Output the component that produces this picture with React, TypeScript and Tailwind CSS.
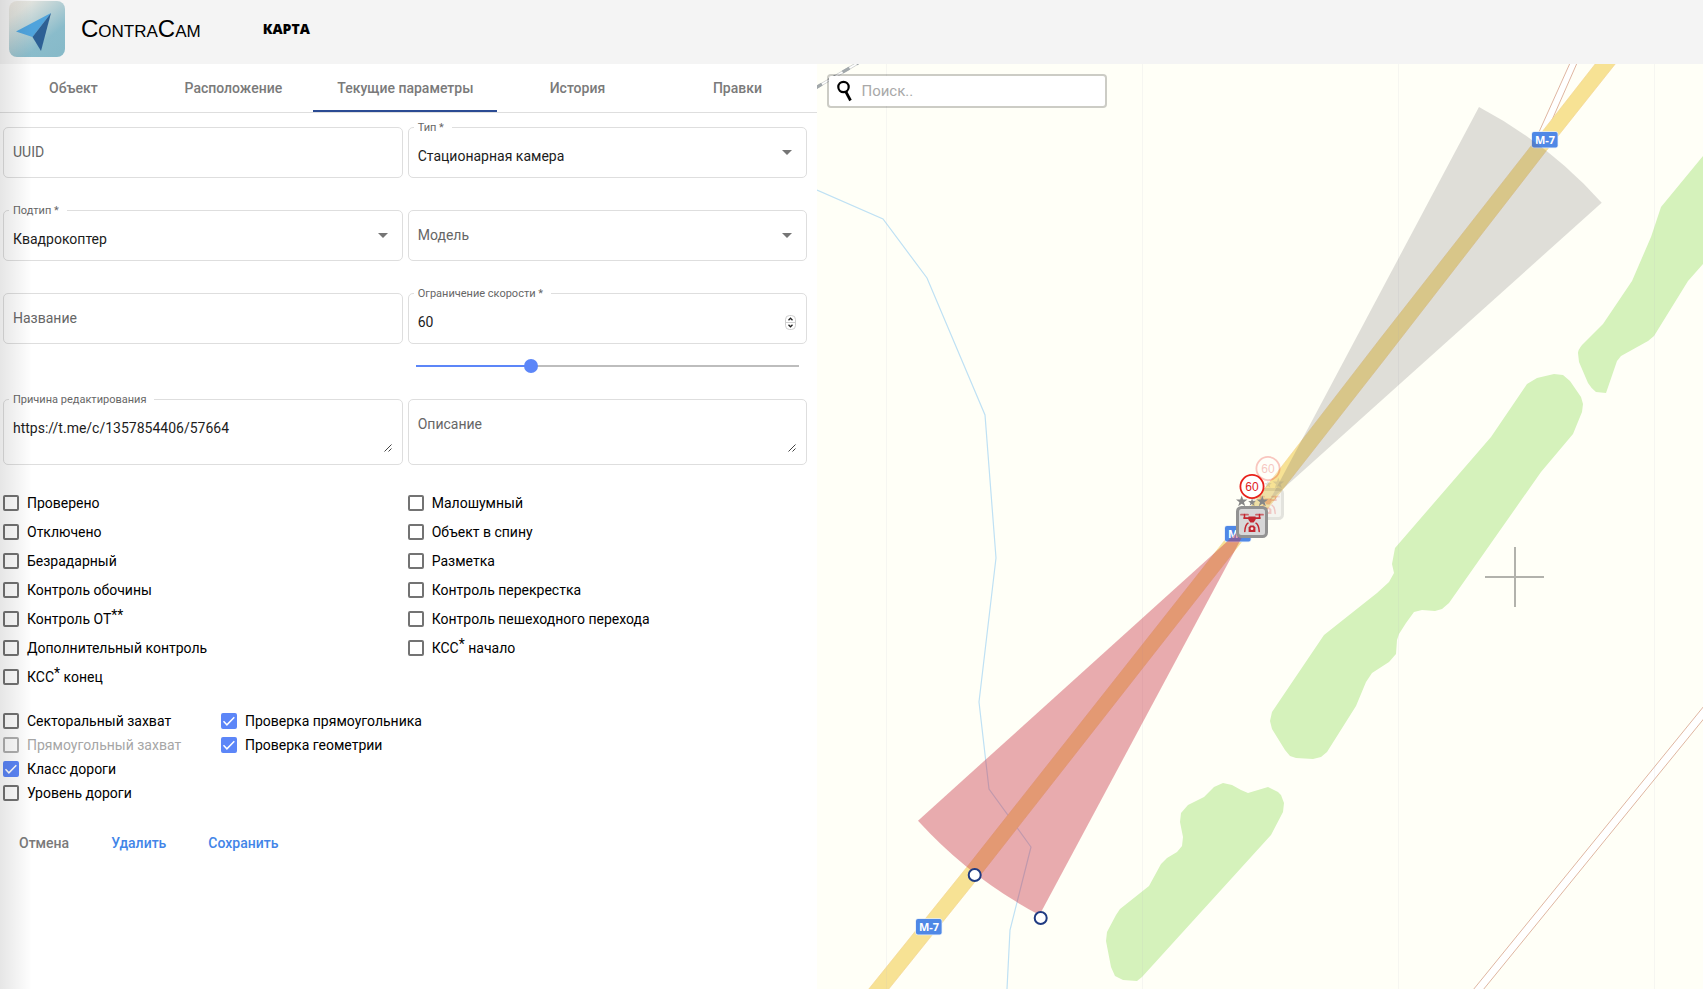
import { useState, type ReactNode } from "react";

const TABS = ["Объект", "Расположение", "Текущие параметры", "История", "Правки"];
const MAX_SPEED = 205;

const FIELD_BOX = "relative rounded-[5px] border border-[#dedede]";
const FLOAT_LABEL =
  "absolute -top-2 left-[5px] bg-white px-1 pr-2 text-[11px] leading-4 text-[#666]";
const REST_LABEL =
  "pointer-events-none absolute top-[14px] left-[9px] text-[14px] leading-5 text-[#666]";
const VALUE = "w-full bg-transparent text-[14px] text-[#1c1c1c] outline-none";

function Caret() {
  return (
    <svg
      className="pointer-events-none absolute top-[22px] right-[14px]"
      width="10"
      height="5"
      viewBox="0 0 10 5"
      aria-hidden="true"
    >
      <path d="M0 0h10L5 5z" fill="#757575" />
    </svg>
  );
}

function SelectField({ id, label, value }: { id: string; label: string; value?: string }) {
  return (
    <div className={`${FIELD_BOX} h-[51px]`}>
      <select
        id={id}
        defaultValue={value ?? ""}
        className={`${VALUE} h-full appearance-none pt-[7px] pr-8 pl-[9px]`}
      >
        <option value={value ?? ""}>{value ?? ""}</option>
      </select>
      <label htmlFor={id} className={value ? FLOAT_LABEL : REST_LABEL}>
        {label}
      </label>
      <Caret />
    </div>
  );
}

function TextField({ id, label }: { id: string; label: string }) {
  return (
    <div className={`${FIELD_BOX} h-[51px]`}>
      <input id={id} type="text" className={`${VALUE} h-full px-[9px]`} />
      <label htmlFor={id} className={REST_LABEL}>
        {label}
      </label>
    </div>
  );
}

function AreaField({ id, label, value }: { id: string; label: string; value?: string }) {
  return (
    <div className={`${FIELD_BOX} h-[66px]`}>
      <textarea
        id={id}
        defaultValue={value}
        className={`${VALUE} block h-full resize-none px-[9px] pt-[18px] leading-5`}
      />
      <label htmlFor={id} className={value ? FLOAT_LABEL : REST_LABEL}>
        {label}
      </label>
      <svg
        className="pointer-events-none absolute right-[10px] bottom-[12px]"
        width="8"
        height="8"
        viewBox="0 0 8 8"
        aria-hidden="true"
      >
        <path d="M0.5 7.5l7-7M4.5 7.5l3-3" stroke="#444" strokeWidth="1" />
      </svg>
    </div>
  );
}

function Note({ children }: { children: string }) {
  return <sup className="-top-1 text-[14px]">{children}</sup>;
}

function Check({
  id,
  children,
  checked = false,
  disabled = false,
}: {
  id: string;
  children: ReactNode;
  checked?: boolean;
  disabled?: boolean;
}) {
  const [on, setOn] = useState(checked);
  return (
    <div className="flex h-4 items-center gap-2">
      <span className="grid size-4 shrink-0">
        <input
          id={id}
          type="checkbox"
          checked={on}
          disabled={disabled}
          onChange={(e) => setOn(e.target.checked)}
          className="col-start-1 row-start-1 size-4 appearance-none rounded-[2px] border-2 border-[#737373] checked:border-[#5c86f8] checked:bg-[#5c86f8] disabled:border-[#b0b0b0]"
        />
        {on && (
          <svg
            className="pointer-events-none col-start-1 row-start-1"
            viewBox="0 0 16 16"
            aria-hidden="true"
          >
            <path d="M2.5 8.3l3.4 3.5 7.4-7.6" fill="none" stroke="#fff" strokeWidth="1.5" />
          </svg>
        )}
      </span>
      <label
        htmlFor={id}
        className={`text-[14px] leading-4 whitespace-nowrap ${disabled ? "text-[#a6a6a6]" : "text-black"}`}
      >
        {children}
      </label>
    </div>
  );
}

function Star({ x, y, r }: { x: number; y: number; r: number }) {
  const points = Array.from({ length: 10 }, (_, i) => {
    const a = (Math.PI / 5) * i - Math.PI / 2;
    const d = i % 2 ? r * 0.4 : r;
    return `${(x + d * Math.cos(a)).toFixed(2)},${(y + d * Math.sin(a)).toFixed(2)}`;
  }).join(" ");
  return <polygon points={points} fill="#878787" />;
}

function RoadShield({ x, y }: { x: number; y: number }) {
  return (
    <g>
      <rect x={x - 0.7} y={y - 0.7} width="27" height="17" rx="3" fill="#e4edf8" />
      <rect x={x} y={y} width="25.6" height="15.6" rx="2" fill="#4f88e6" />
      <text
        x={x + 13}
        y={y + 11.8}
        textAnchor="middle"
        fontSize="11"
        className="fill-white font-['Noto_Sans',sans-serif] font-bold"
      >
        М-7
      </text>
    </g>
  );
}

/* Drone camera pin; the origin is the centre of its square icon. */
function DronePin({ x, y, opacity = 1 }: { x: number; y: number; opacity?: number }) {
  return (
    <g transform={`translate(${x} ${y})`} opacity={opacity}>
      <circle cy="-35.5" r="11.6" fill="#fff" stroke="#e8211a" strokeWidth="1.8" />
      <text
        y="-31.2"
        textAnchor="middle"
        fontSize="12"
        className="fill-[#e0221c] font-['Liberation_Sans',sans-serif]"
      >
        60
      </text>
      <Star x={-10.3} y={-20.6} r={6} />
      <Star x={0} y={-19.6} r={4} />
      <Star x={10.3} y={-20.6} r={6} />
      <rect x="-14.5" y="-14.5" width="29" height="29" rx="4" fill="#d7d7d8" stroke="#929292" strokeWidth="3" />
      <g stroke="#c3262f" fill="none" strokeLinecap="round">
        <path d="M-11-7.3h7M4-7.3h7" strokeWidth="1.8" opacity="0.65" />
        <path d="M-7.5-7.5v3.2M7.5-7.5v3.2" strokeWidth="1.5" />
        <path d="M-8-3.9h5M8-3.9h-5" strokeWidth="1.7" />
        <path d="M-4 1.2C-6 2.5-7 5.5-7.2 9.5M4 1.2C6 2.5 7 5.5 7.2 9.5" strokeWidth="1.5" />
      </g>
      <path d="M-3.6-5.4h7.2v3.2L1.6.4h-3.2L-3.6-2.2z" fill="#c3262f" />
      <path d="M-3.4 10V5.6L-1.8 3.4h3.6l1.600 2.200V10z" fill="#c3262f" />
      <circle cy="6.7" r="1.4" fill="#f3e4e4" />
    </g>
  );
}

function MapDrawing() {
  return (
    <svg
      className="absolute inset-0 size-full"
      viewBox="817 64 886 925"
      preserveAspectRatio="xMinYMin slice"
      role="img"
      aria-label="Карта"
    >
      <g fill="#d5f2bb">
        <path d="M1703 156 1661 207 1651 237 1632 281 1603 324 1582 345Q1578 350 1578 353L1579 362 1588 383Q1591 388 1596 392L1606 393 1617 361 1621 356 1648 341 1654 336 1688 281 1703 264z" />
        <path d="M1537 378 1554 374 1563 375 1570 381 1581 397 1583 404 1582 412 1573 434 1541 472 1449 603 1442 609 1435 611 1422 610 1414 612 1406 623 1399 634 1397 640 1396 654 1389 662 1372 673 1366 682 1356 706 1327 752 1321 757 1313 759 1296 758 1290 756 1285 750 1272 729 1270 721 1272 712 1324 635 1377 593 1389 582 1394 573 1392 564 1395 548 1491 437 1527 384z" />
        <path d="M1223 783 1232 785 1241 790 1248 793 1268 787 1278 792 1281 795 1284 803 1283 812 1271 835 1142 977 1137 981 1123 980 1115 976 1111 967 1106 941 1107 932 1116 915 1120 909 1149 886 1161 864 1167 858 1177 852 1182 846 1183 837 1180 822 1181 813 1188 805 1204 797 1214 787z" />
      </g>

      <path
        d="M817 190 883 219 927 278 985 415 996 558 979 702 989 789 1031 847 1010 930 1007 989"
        fill="none"
        stroke="#bfe1f4"
        strokeWidth="1.2"
      />

      <path d="M1704 706 1473 990h10L1704 718.5z" fill="#fff" />
      <path d="M1704 706 1473 990M1704 718.5 1483 990" stroke="#dfb6a1" strokeWidth="1" />
      <path d="M1570 62 1539 132 1553 118 1577.5 62z" fill="#fff" />
      <path d="M1570.5 62 1539 132M1577.5 62 1552 120" stroke="#dfb6a1" strokeWidth="1" />

      <path d="M815 88.3 858 63" stroke="#c9ccca" strokeWidth="3" />
      <path d="M815 88.3 858 63" stroke="#fff" strokeWidth="1.6" />
      <path d="M815 88.3 858 63" stroke="#a2a8ab" strokeWidth="3.2" strokeDasharray="8 8" />

      <path
        d="M1596 63 1380 339 1225 540 967 867 868 990H888L982 873 1243 540 1384 360 1546.5 150.5 1616 63z"
        fill="#f7e294"
        stroke="#f3d594"
        strokeWidth="0.7"
      />

      <path
        d="M886.5 64V989M1142.5 64V989M1398.5 64V989M1654.5 64V989"
        stroke="#b4b4c8"
        strokeOpacity="0.12"
      />

      <RoadShield x={1532} y={132} />
      <RoadShield x={1225} y={526} />
      <RoadShield x={916} y={919} />

      <path d="M1269.4 501 1479 107A446 446 0 0 1 1601.7 202.7z" fill="#605a60" fillOpacity="0.2" />
      <path d="M1251.5 519.5 918 820.7A449 449 0 0 0 1039.5 915z" fill="#c52d41" fillOpacity="0.4" />

      <g fill="#fff" stroke="#1f3b82" strokeWidth="2">
        <circle cx="974.7" cy="875" r="6" />
        <circle cx="1040.7" cy="918" r="6" />
      </g>

      <DronePin x={1268} y={504} opacity={0.25} />
      <DronePin x={1252} y={522} />

      <path d="M1515 547v60M1485 577h59" stroke="#000" strokeOpacity="0.3" strokeWidth="2" />
    </svg>
  );
}

export default function App() {
  const [speed, setSpeed] = useState(60);
  const fill = Math.round((speed / MAX_SPEED) * 100);

  return (
    <div className="relative flex min-h-screen flex-col bg-white font-['Roboto',sans-serif] text-black">
      <header className="flex h-16 shrink-0 items-start bg-[#f4f4f4] pl-[9px]">
        <svg className="mt-px size-14" viewBox="0 0 56 56" aria-hidden="true">
          <defs>
            <linearGradient id="logo-bg" x1="0" y1="0" x2="0.8" y2="1">
              <stop offset="0" stopColor="#ebe6df" />
              <stop offset="0.2" stopColor="#e0e2dd" />
              <stop offset="0.75" stopColor="#8abccb" />
              <stop offset="1" stopColor="#87bac9" />
            </linearGradient>
          </defs>
          <rect width="56" height="56" rx="8" fill="url(#logo-bg)" />
          <path d="M7 30.5 42 12 23.5 36z" fill="#4fa3dc" />
          <path d="M42 12 32 50 23.5 36z" fill="#2d6095" />
        </svg>
        <h1 className="mt-[13px] ml-4 font-['Liberation_Sans',sans-serif] text-[24px] leading-8 [font-variant-caps:small-caps]">
          ContraCam
        </h1>
        <nav className="mt-[17px] ml-[62px]">
          <a href="#map" className="font-['Open_Sans',sans-serif] text-[14px] leading-5 font-extrabold">
            КАРТА
          </a>
        </nav>
      </header>

      <main className="flex grow">
        <section className="w-[48%] shrink-0">
          <div role="tablist" className="flex justify-end overflow-hidden border-b border-[#dedede]">
            {TABS.map((tab) => {
              const active = tab === "Текущие параметры";
              return (
                <button
                  key={tab}
                  type="button"
                  role="tab"
                  aria-selected={active}
                  className={`h-12 min-w-40 shrink-0 grow border-b-2 px-6 pt-[2px] text-[14px] font-medium whitespace-nowrap text-[#7a7a7a] ${
                    active ? "border-[#2b4b93]" : "border-transparent"
                  }`}
                >
                  {tab}
                </button>
              );
            })}
          </div>

          <form className="pt-[14px] pr-[10px] pl-[3px]" onSubmit={(e) => e.preventDefault()}>
            <div className="grid grid-cols-2 gap-x-[5px] gap-y-8">
              <TextField id="uuid" label="UUID" />
              <SelectField id="type" label="Тип *" value="Стационарная камера" />
              <SelectField id="subtype" label="Подтип *" value="Квадрокоптер" />
              <SelectField id="model" label="Модель" />
              <TextField id="name" label="Название" />
              <div>
                <div className={`${FIELD_BOX} h-[51px]`}>
                  <input
                    id="speed"
                    type="number"
                    value={speed}
                    onChange={(e) => setSpeed(Number(e.target.value))}
                    className={`${VALUE} h-full [appearance:textfield] pt-[7px] pl-[9px]`}
                  />
                  <label htmlFor="speed" className={FLOAT_LABEL}>
                    Ограничение скорости *
                  </label>
                  <svg
                    className="pointer-events-none absolute top-[21px] right-[10px]"
                    width="11"
                    height="15"
                    viewBox="0 0 11 15"
                    aria-hidden="true"
                  >
                    <rect x="0.5" y="0.5" width="10" height="14" rx="4" fill="#fff" stroke="#cfcfcf" />
                    <path d="M0.5 7.5h10" stroke="#cfcfcf" />
                    <path d="M3.5 5.2l2-2 2 2M3.5 9.8l2 2 2-2" fill="none" stroke="#222" strokeWidth="1.3" />
                  </svg>
                </div>
                <input
                  type="range"
                  aria-label="Ограничение скорости"
                  min={0}
                  max={MAX_SPEED}
                  value={speed}
                  onChange={(e) => setSpeed(Number(e.target.value))}
                  style={{
                    backgroundImage: `linear-gradient(to right, #5c86f8 ${fill}%, #bdbdbd ${fill}%)`,
                  }}
                  className="mx-2 mt-[21px] block h-[2px] w-[calc(100%-16px)] appearance-none [&::-webkit-slider-thumb]:size-[14px] [&::-webkit-slider-thumb]:appearance-none [&::-webkit-slider-thumb]:rounded-full [&::-webkit-slider-thumb]:bg-[#5c86f8]"
                />
              </div>
              <AreaField id="reason" label="Причина редактирования" value="https://t.me/c/1357854406/57664" />
              <AreaField id="description" label="Описание" />
            </div>

            <div className="mt-[30px] grid grid-cols-2 gap-x-[5px]">
              <div className="flex flex-col gap-[13px]">
                <Check id="verified">Проверено</Check>
                <Check id="disabled">Отключено</Check>
                <Check id="no-radar">Безрадарный</Check>
                <Check id="roadside">Контроль обочины</Check>
                <Check id="public-transport">
                  Контроль ОТ<Note>**</Note>
                </Check>
                <Check id="additional">Дополнительный контроль</Check>
                <Check id="avg-end">
                  КСС<Note>*</Note> конец
                </Check>
              </div>
              <div className="flex flex-col gap-[13px]">
                <Check id="low-noise">Малошумный</Check>
                <Check id="back">Объект в спину</Check>
                <Check id="marking">Разметка</Check>
                <Check id="crossroad">Контроль перекрестка</Check>
                <Check id="crosswalk">Контроль пешеходного перехода</Check>
                <Check id="avg-start">
                  КСС<Note>*</Note> начало
                </Check>
              </div>
            </div>

            <div className="mt-7 flex">
              <div className="flex w-[218px] flex-col gap-2">
                <Check id="sector">Секторальный захват</Check>
                <Check id="rect" disabled>
                  Прямоугольный захват
                </Check>
                <Check id="road-class" checked>
                  Класс дороги
                </Check>
                <Check id="road-level">Уровень дороги</Check>
              </div>
              <div className="flex flex-col gap-2">
                <Check id="check-rect" checked>
                  Проверка прямоугольника
                </Check>
                <Check id="check-geometry" checked>
                  Проверка геометрии
                </Check>
              </div>
            </div>

            <div className="mt-6 flex gap-[10px] text-[14px] font-medium">
              <button type="button" className="h-9 px-4 text-[#7a7a7a]">
                Отмена
              </button>
              <button type="button" className="h-9 px-4 text-[#4285e8]">
                Удалить
              </button>
              <button type="submit" className="h-9 px-4 text-[#4285e8]">
                Сохранить
              </button>
            </div>
          </form>
        </section>

        <section className="relative grow overflow-hidden bg-[#fffff7]">
          <MapDrawing />
          <div className="absolute top-[10px] left-[10px] flex h-[34px] w-[280px] items-center rounded-[4px] border-2 border-black/20 bg-white bg-clip-padding pl-2">
            <svg className="shrink-0" width="16" height="22" viewBox="0 0 16 22" aria-hidden="true">
              <circle cx="6.5" cy="7" r="5.2" fill="none" stroke="#000" strokeWidth="2.2" />
              <path d="M8.7 11.5 13.5 20.5" stroke="#000" strokeWidth="2.7" />
            </svg>
            <input
              type="search"
              aria-label="Поиск"
              placeholder="Поиск.."
              className="ml-2 w-full bg-transparent pt-px text-[15px] outline-none placeholder:text-[#a9a9a9]"
            />
          </div>
        </section>
      </main>

      <div className="pointer-events-none absolute inset-y-0 left-0 w-8 bg-linear-to-r from-black/10 to-transparent" />
    </div>
  );
}
